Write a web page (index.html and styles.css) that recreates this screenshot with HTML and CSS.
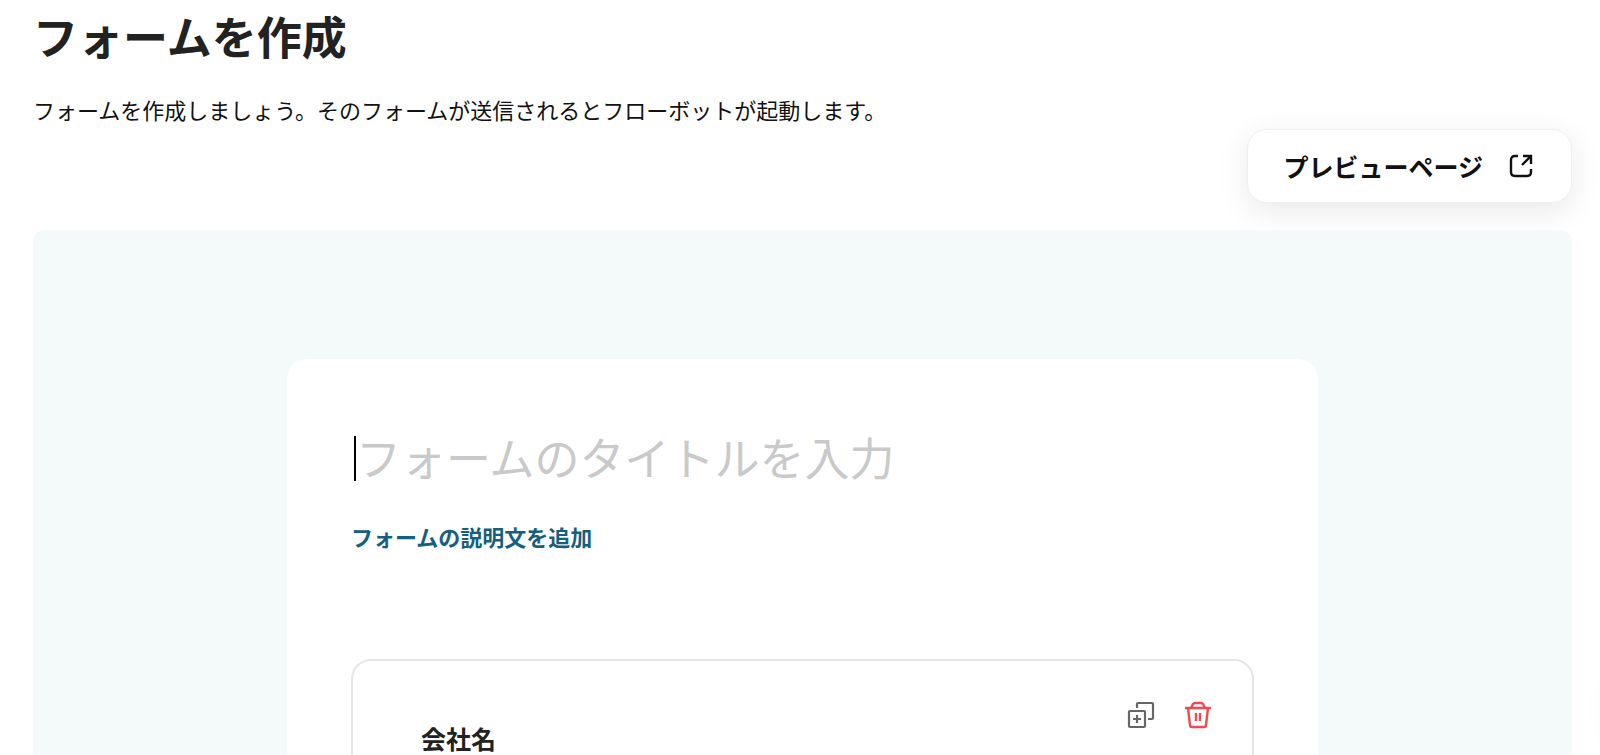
FILE: index.html
```html
<!DOCTYPE html>
<html lang="ja">
  <head>
    <meta charset="utf-8">
    <title>フォームを作成</title>
    <link rel="stylesheet" href="styles.css">
  </head>
  <body>
    <main class="page">
      <header class="header">
        <h1 class="title">フォームを作成</h1>
        <p class="lead">フォームを作成しましょう。そのフォームが送信されるとフローボットが起動します。</p>
        <button class="preview" type="button">
          プレビューページ
          <svg width="24" height="24" viewBox="0 0 24 24" fill="none" stroke="currentColor" stroke-width="2.4">
            <path d="M9 2H6Q2 2 2 6V18Q2 22 6 22H18Q22 22 22 18V15"></path>
            <path d="M13 11L22 2M14 2H22V10"></path>
          </svg>
        </button>
      </header>

      <section class="board">
        <form class="card">
          <input class="form-title" type="text" aria-label="フォームのタイトル" placeholder="フォームのタイトルを入力">
          <button class="add-description" type="button">フォームの説明文を追加</button>

          <div class="field">
            <h2 class="field-name">会社名</h2>
            <div class="actions">
              <button class="icon copy" type="button" aria-label="複製">
                <svg width="28" height="28" viewBox="0 0 28 28" fill="none" stroke="currentColor" stroke-width="2.2">
                  <rect x="2" y="10" width="16" height="16" rx="1"></rect>
                  <path d="M10 7V3Q10 2 11 2H25Q26 2 26 3V17Q26 18 25 18H21"></path>
                  <path d="M10 14V22M6 18H14"></path>
                </svg>
              </button>
              <button class="icon remove" type="button" aria-label="削除">
                <svg width="28" height="28" viewBox="0 0 28 28" fill="none" stroke="currentColor" stroke-width="2.4">
                  <path d="M1 7H27M7 7L9 3Q10 2 11 2H17Q18 2 19 3L21 7"></path>
                  <path d="M4 7L6 24Q6 26 8 26H20Q22 26 22 24L24 7"></path>
                  <path d="M12 12V20M16 12V20"></path>
                </svg>
              </button>
            </div>
          </div>
        </form>
      </section>
    </main>
    <div class="float-shadow"></div>
  </body>
</html>
```

FILE: styles.css
```css
* {
  box-sizing: border-box;
}
body {
  margin: 0;
  background: #fff;
  color: #222;
  font-family: "Noto Sans CJK JP", sans-serif;
}
button, input {
  padding: 0;
  border: 0;
  background: none;
  color: inherit;
  font-family: inherit;
}
.page {
  display: flex;
  flex-direction: column;
  height: 100vh;
  padding: 0 28px 0 33px;
  overflow: hidden;
}
.header {
  display: flex;
  flex-direction: column;
  flex-shrink: 0;
  padding-top: 6px;
}
.title {
  margin: 0;
  font-size: 45px;
  line-height: 60px;
}
.lead {
  margin: 27px 0 0;
  color: #111;
  font-size: 22px;
  line-height: 32px;
}
.preview {
  display: flex;
  align-items: center;
  align-self: flex-end;
  gap: 26px;
  height: 74px;
  margin-top: 4px;
  padding: 0 38px 0 35px;
  border: 1px solid #f0f0f0;
  border-radius: 20px;
  background: #fff;
  box-shadow: 0 8px 32px rgba(0, 0, 0, .09);
  color: #111;
  font-size: 25px;
  font-weight: bold;
}
.board {
  position: relative;
  flex-grow: 1;
  margin-top: 27px;
  padding-top: 129px;
  border-radius: 12px 12px 0 0;
  background: #f4fafa;
}
.card {
  width: 67%;
  min-height: 600px;
  margin: 0 auto;
  padding: 77px 64px;
  border-radius: 20px;
  background: #fff;
}
/* left border stands in for the text cursor of the empty title */
.form-title {
  display: block;
  width: 100%;
  height: 45px;
  margin-left: 3px;
  padding-bottom: 5px;
  border-left: 2px solid #000;
  outline: 0;
  font-size: 45px;
  line-height: 40px;
}
.form-title::placeholder {
  color: #c9c9c9;
  opacity: 1;
}
.add-description {
  display: block;
  margin-top: 39px;
  color: #155f7f;
  font-size: 22px;
  font-weight: bold;
  line-height: 32px;
}
.field {
  display: flex;
  justify-content: space-between;
  align-items: flex-start;
  height: 240px;
  margin-top: 107px;
  padding: 40px;
  padding-left: 68px;
  border: 2px solid #e6e6e6;
  border-radius: 20px;
}
.field-name {
  margin: 19px 0 0;
  font-size: 25px;
  line-height: 36px;
}
.actions {
  display: flex;
  gap: 29px;
}
.icon svg {
  display: block;
}
.copy {
  color: #666;
}
.remove {
  color: #ee4b50;
}
.float-shadow {
  position: fixed;
  right: -96px;
  bottom: 0;
  width: 90px;
  height: 90px;
  border-radius: 50%;
  box-shadow: 0 0 24px rgba(0, 0, 0, .06);
}
```
